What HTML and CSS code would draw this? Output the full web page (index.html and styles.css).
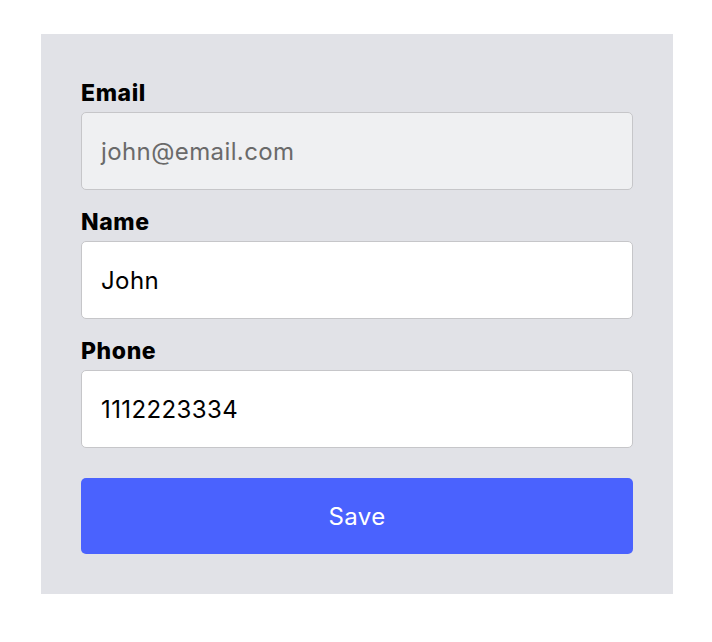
FILE: index.html
```html
<!DOCTYPE html>
<html>
<head>
<meta charset="utf-8">
<link rel="stylesheet" href="styles.css">
</head>
<body>
<form class="card">
  <div class="field">
    <label class="label">Email</label>
    <div class="input input-disabled">john@email.com</div>
  </div>
  <div class="field">
    <label class="label">Name</label>
    <div class="input">John</div>
  </div>
  <div class="field">
    <label class="label">Phone</label>
    <div class="input">1112223334</div>
  </div>
  <button type="button" class="save">Save</button>
</form>
</body>
</html>
```
FILE: styles.css
```css
html, body {
  margin: 0;
  padding: 0;
  background: #ffffff;
}
body {
  font-family: "Inter", "Open Sans", sans-serif;
  padding: 34px 39px 0 41px;
}
.card {
  width: 632px;
  height: 560px;
  box-sizing: border-box;
  background: #e1e2e7;
  padding: 40px 40px;
  display: flex;
  flex-direction: column;
}
.field {
  display: flex;
  flex-direction: column;
  margin-bottom: 13px;
}
.label {
  font-size: 23px;
  font-weight: 800;
  letter-spacing: 0.6px;
  color: #000;
  height: 38px;
  line-height: 38px;
}
.input {
  height: 78px;
  box-sizing: border-box;
  border: 1px solid #c6c6c9;
  border-radius: 5px;
  background: #fff;
  padding: 0 19px;
  display: flex;
  align-items: center;
  font-size: 24px;
  letter-spacing: 0.4px;
  color: #000;
}
.input-disabled {
  background: #eff0f2;
  color: #6a6a6a;
}
.save {
  margin-top: 17px;
  height: 76px;
  border: none;
  border-radius: 5px;
  background: #4a62fe;
  color: #fff;
  font-family: inherit;
  font-size: 24px;
  letter-spacing: 0.4px;
  font-weight: 400;
}
```
